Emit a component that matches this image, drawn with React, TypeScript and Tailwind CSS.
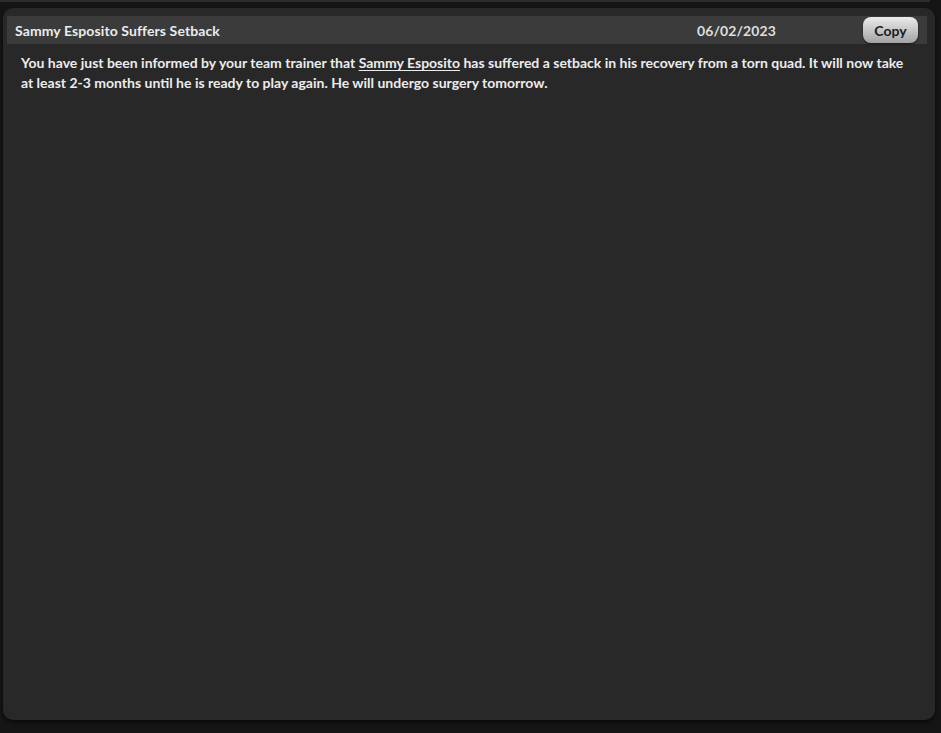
export default function App() {
  return (
    <div
      className="w-[941px] h-[733px] bg-[#151515] pt-[8px] pl-[3px] pr-[6px] pb-[13px] overflow-hidden"
      style={{ fontFamily: "Lato, 'Noto Sans', sans-serif" }}
    >
      <div className="border-t-2 border-[#2c2c2c] -mt-[8px] mb-[6px] -ml-[3px] w-[930px]" />
      {/* Message panel */}
      <div className="h-[712px] rounded-[10px] bg-[#282828] shadow-[0_2px_4px_rgba(0,0,0,0.6)] pt-[8px] px-[4px]">
        <div className="flex items-center h-[28px] bg-[#3b3b3b] pl-[8px] pr-[9px] w-[920px]">
          <span className="text-[14px] font-bold text-[#ececec] tracking-[0.1px] flex-1">Sammy Esposito Suffers Setback</span>
          <span className="text-[14px] font-bold text-[#dedede] mr-[87px] tracking-[0.1px]">06/02/2023</span>
          <button className="h-[26px] w-[55px] rounded-[8px] bg-gradient-to-b from-[#ececec] to-[#a3a3a3] text-[14px] font-bold text-[#1a1a1a] shadow-[0_1px_2px_rgba(0,0,0,0.6)]">
            Copy
          </button>
        </div>
        <p className="text-[14px] font-bold text-[#ececec] leading-[20px] pt-[9px] px-[14px]">
          You have just been informed by your team trainer that{" "}
          <span className="underline underline-offset-2">Sammy Esposito</span> has suffered a setback in his
          recovery from a torn quad. It will now take at least 2-3 months until he is ready to play again. He will
          undergo surgery tomorrow.
        </p>
      </div>
    </div>
  );
}
